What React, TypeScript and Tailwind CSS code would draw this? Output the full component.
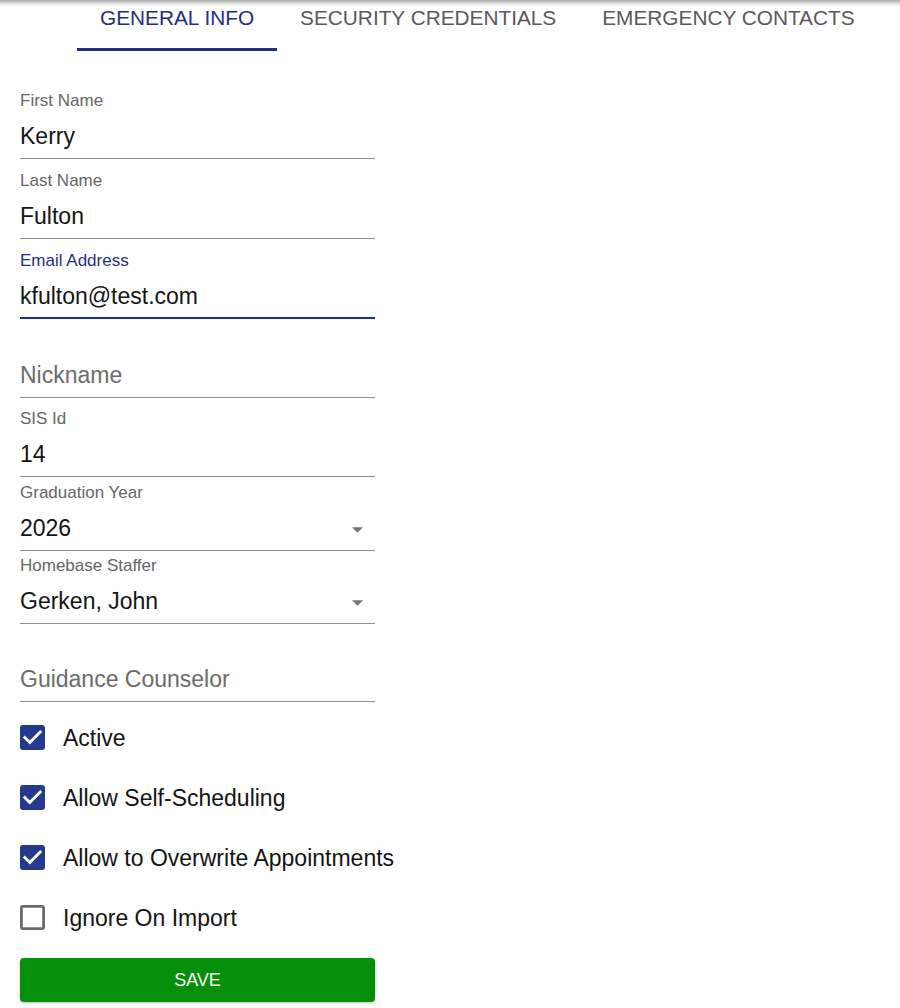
import React from "react";

const BLUE = "text-[#1f2e83]";

function Field({
  label,
  value,
  placeholder,
  focused,
  select,
  className,
}: {
  label?: string;
  value?: string;
  placeholder?: string;
  focused?: boolean;
  select?: boolean;
  className?: string;
}) {
  return (
    <div className={`relative w-[355px] ${className ?? ""}`}>
      <div
        className={`h-[20px] text-[17px] leading-[20px] ${
          focused ? BLUE : "text-[#666666]"
        }`}
      >
        {label ?? ""}
      </div>
      <div
        className={`mt-[11px] h-[28px] text-[23px] leading-[28px] ${
          value ? "text-[#141414]" : "text-[#6b6b6b]"
        }`}
      >
        {value ?? placeholder}
      </div>
      <div className="h-[8px]" />
      {focused ? (
        <div className="h-[2px] -mt-[1px] bg-[#1f2e85]" />
      ) : (
        <div className="h-[1px] bg-[#8f8f8f]" />
      )}
      {select && (
        <svg
          className="absolute right-[12px] top-[44px]"
          width="11"
          height="6"
          viewBox="0 0 10 5"
        >
          <path d="M0 0l5 5 5-5z" fill="#757575" />
        </svg>
      )}
    </div>
  );
}

function Check({ checked, label }: { checked: boolean; label: string }) {
  return (
    <div className="flex h-[25px] items-center">
      <svg width="25" height="25" viewBox="3 3 18 18" className="shrink-0">
        {checked ? (
          <path
            fill="#243a8c"
            d="M19 3H5c-1.11 0-2 .9-2 2v14c0 1.1.89 2 2 2h14c1.11 0 2-.9 2-2V5c0-1.1-.89-2-2-2zm-9 14l-5-5 1.41-1.41L10 14.17l7.59-7.59L19 8l-9 9z"
          />
        ) : (
          <path
            fill="#6a6a6a"
            d="M19 5v14H5V5h14m0-2H5c-1.1 0-2 .9-2 2v14c0 1.1.9 2 2 2h14c1.1 0 2-.9 2-2V5c0-1.1-.9-2-2-2z"
          />
        )}
      </svg>
      <span className="ml-[18px] whitespace-nowrap text-[23px] leading-[28px] text-[#141414]">
        {label}
      </span>
    </div>
  );
}

export default function App() {
  return (
    <div
      className="relative min-h-[1008px] w-[900px] bg-white"
      style={{ fontFamily: '"Liberation Sans", Arial, sans-serif' }}
    >
      <div className="pointer-events-none absolute left-0 right-0 top-0 h-[7px] bg-gradient-to-b from-[#a8a8a8] via-[#e4e4e4] to-transparent" />
      <div className="flex h-[51px] pl-[77px]">
        <div className="relative px-[23px] pt-[6px] text-[20.8px] leading-[24px] text-[#1f2e83] whitespace-nowrap">
          GENERAL INFO
          <div className="absolute bottom-0 left-0 right-0 h-[3px] bg-[#1f2e85]" />
        </div>
        <div className="px-[23px] pt-[6px] text-[20.8px] leading-[24px] text-[#5a5a5a] whitespace-nowrap">
          SECURITY CREDENTIALS
        </div>
        <div className="px-[23px] pt-[6px] text-[20.8px] leading-[24px] text-[#5a5a5a] whitespace-nowrap">
          EMERGENCY CONTACTS
        </div>
      </div>

      <div className="flex flex-col pl-[20px] pt-[40px]">
        <Field label="First Name" value="Kerry" />
        <Field label="Last Name" value="Fulton" className="mt-[12px]" />
        <Field
          label="Email Address"
          value="kfulton@test.com"
          focused
          className="mt-[12px]"
        />
        <Field placeholder="Nickname" className="mt-[11px]" />
        <Field label="SIS Id" value="14" className="mt-[11px]" />
        <Field
          label="Graduation Year"
          value="2026"
          select
          className="mt-[6px]"
        />
        <Field
          label="Homebase Staffer"
          value="Gerken, John"
          select
          className="mt-[5px]"
        />
        <Field placeholder="Guidance Counselor" className="mt-[10px]" />

        <div className="mt-[23px] flex flex-col gap-[35px]">
          <Check checked label="Active" />
          <Check checked label="Allow Self-Scheduling" />
          <Check checked label="Allow to Overwrite Appointments" />
          <Check checked={false} label="Ignore On Import" />
        </div>

        <button className="mt-[28px] h-[44px] w-[355px] rounded-[4px] bg-[#058f0b] text-[18px] text-white shadow-[0_1px_3px_rgba(0,0,0,0.25)]">
          SAVE
        </button>
      </div>
    </div>
  );
}
